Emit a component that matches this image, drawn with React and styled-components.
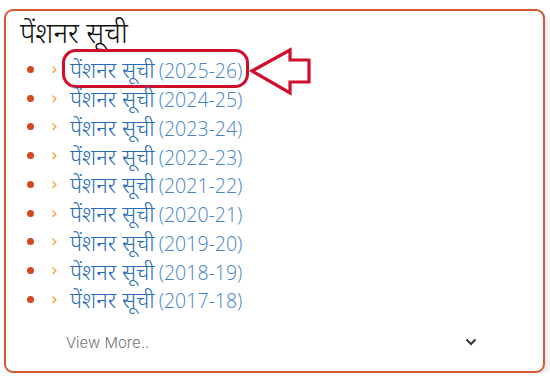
import React from 'react'
import styled, { createGlobalStyle } from 'styled-components'

const GlobalStyle = createGlobalStyle`
  html, body {
    margin: 0;
    padding: 0;
    background: #ffffff;
  }
`

const years = [
  '2025-26',
  '2024-25',
  '2023-24',
  '2022-23',
  '2021-22',
  '2020-21',
  '2019-20',
  '2018-19',
  '2017-18',
]

const Card = styled.div`
  box-sizing: border-box;
  position: relative;
  margin: 9px 0 0 4px;
  width: 541px;
  height: 364px;
  border: 2px solid #d55a2f;
  border-radius: 9px;
  background: #fff;
  box-shadow: 3px 4px 6px rgba(170, 180, 205, 0.35);
  padding: 4px 0 0 14px;
`

const Title = styled.h3`
  margin: 0;
  font-family: "Noto Sans", "Noto Sans Devanagari", "Lohit Devanagari", sans-serif;
  font-weight: 300;
  font-size: 28px;
  line-height: 35px;
  color: #111;
`

const List = styled.ul`
  list-style: none;
  margin: 5px 0 0 0;
  padding: 0;
`

const Row = styled.li`
  position: relative;
  display: flex;
  align-items: center;
  height: 28.75px;
`

const Dot = styled.span`
  width: 7px;
  height: 7px;
  border-radius: 50%;
  background: #d2491b;
  margin-left: 7px;
`

const Chevron = styled.span`
  margin-left: 17px;
  width: 19px;
  font-family: "DejaVu Sans", sans-serif;
  font-size: 17px;
  line-height: 1;
  color: #f0a53a;
`

const Link = styled.a`
  font-family: "Noto Sans", "Noto Sans Devanagari", sans-serif;
  font-weight: 300;
  font-size: 22px;
  color: #2a6db5;
  text-decoration: none;
  white-space: nowrap;
`

const Year = styled.span`
  font-family: "Open Sans", sans-serif;
  font-weight: 300;
  font-size: 19.5px;
  color: #4483c6;
  margin-left: 4px;
`

const Highlight = styled.span`
  position: absolute;
  left: 42px;
  top: -6px;
  width: 187px;
  height: 39px;
  box-sizing: border-box;
  border: 3px solid #cf0f2b;
  border-radius: 14px;
  pointer-events: none;
`

const Pointer = styled.svg`
  position: absolute;
  left: 229px;
  top: -9px;
`

const Footer = styled.div`
  display: flex;
  align-items: center;
  justify-content: space-between;
  margin-top: 19px;
  padding: 0 66px 0 46px;
`

const ViewMore = styled.span`
  font-family: "Inter", sans-serif;
  font-weight: 300;
  font-size: 15px;
  color: #777;
`

function LeftArrow() {
  return (
    <Pointer width="64" height="50" viewBox="0 0 64 50">
      <path
        d="M3 25 L41 4 L41 14 L60 14 L60 36 L41 36 L41 47 Z"
        fill="none"
        stroke="#cf0f2b"
        strokeWidth="3.2"
        strokeLinejoin="miter"
      />
    </Pointer>
  )
}

function ChevronDown() {
  return (
    <svg width="12" height="8" viewBox="0 0 12 8">
      <path d="M1.5 1.5 L6 6 L10.5 1.5" fill="none" stroke="#333" strokeWidth="2" />
    </svg>
  )
}

export default function App() {
  return (
    <>
      <GlobalStyle />
      <Card>
        <Title>पेंशनर सूची</Title>
        <List>
          {years.map((y, i) => (
            <Row key={y}>
              <Dot />
              <Chevron>›</Chevron>
              <Link href="#">
                पेंशनर सूची
                <Year>({y})</Year>
              </Link>
              {i === 0 && (
                <>
                  <Highlight />
                  <LeftArrow />
                </>
              )}
            </Row>
          ))}
        </List>
        <Footer>
          <ViewMore>View More..</ViewMore>
          <ChevronDown />
        </Footer>
      </Card>
    </>
  )
}
